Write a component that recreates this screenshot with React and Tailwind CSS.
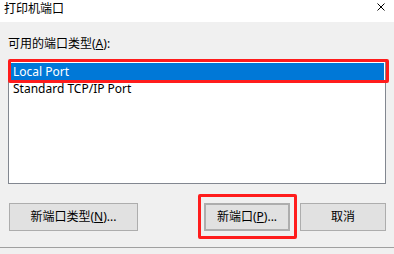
import React from "react";

const font = { fontFamily: '"Noto Sans", "Noto Sans CJK SC", sans-serif' };

function Btn({ children, className = "" }) {
  return (
    <button
      className={
        "h-[28px] bg-[#e1e1e1] border border-[#adadad] text-[12px] leading-[16px] text-black flex items-center justify-center " +
        className
      }
    >
      {children}
    </button>
  );
}

export default function App() {
  return (
    <div
      className="w-[394px] h-[254px] bg-[#f0f0f0] flex flex-col overflow-hidden"
      style={font}
    >
      <div className="h-[22px] bg-white flex items-start justify-between pl-[4px] pr-[9px]">
        <span className="text-[12px] leading-[16px] pt-[1px] text-black">打印机端口</span>
        <svg width="8" height="8" viewBox="0 0 8 8" className="mt-[3px]">
          <path d="M0.5 0.5 L7.5 7.5 M7.5 0.5 L0.5 7.5" stroke="#000" strokeWidth="1" />
        </svg>
      </div>

      <div className="px-[8px]">
        <div className="mt-[14px] text-[12px] leading-[16px] text-black">
          可用的端口类型(<span className="underline">A</span>):
        </div>

        <div className="relative mt-[9px] w-[378px] h-[123px] border border-[#828790] bg-white p-[1px] text-[12px] leading-[17px]">
          <div className="h-[17px] bg-[#0078d7] text-white pl-[3px]">Local Port</div>
          <div className="h-[17px] text-black pl-[3px]">Standard TCP/IP Port</div>
          <div className="absolute left-[-1px] top-[-3px] w-[381px] h-[24px] border-[3px] border-[#ff1c1c] rounded-[2px]" />
        </div>

        <div className="mt-[19px] flex">
          <Btn className="ml-[1px] w-[129px]">
            新端口类型(<span className="underline">N</span>)...
          </Btn>
          <div className="relative ml-[66px]">
            <Btn className="w-[86px] border-2 border-[#0078d7]">
              新端口(<span className="underline">P</span>)...
            </Btn>
            <div className="absolute left-[-6px] top-[-9px] w-[99px] h-[45px] border-[3px] border-[#ff1c1c] rounded-[2px]" />
          </div>
          <Btn className="ml-[10px] w-[86px]">取消</Btn>
        </div>
      </div>

      <div className="mt-auto h-[7px] border-t border-[#a0a0a0]" />
    </div>
  );
}
